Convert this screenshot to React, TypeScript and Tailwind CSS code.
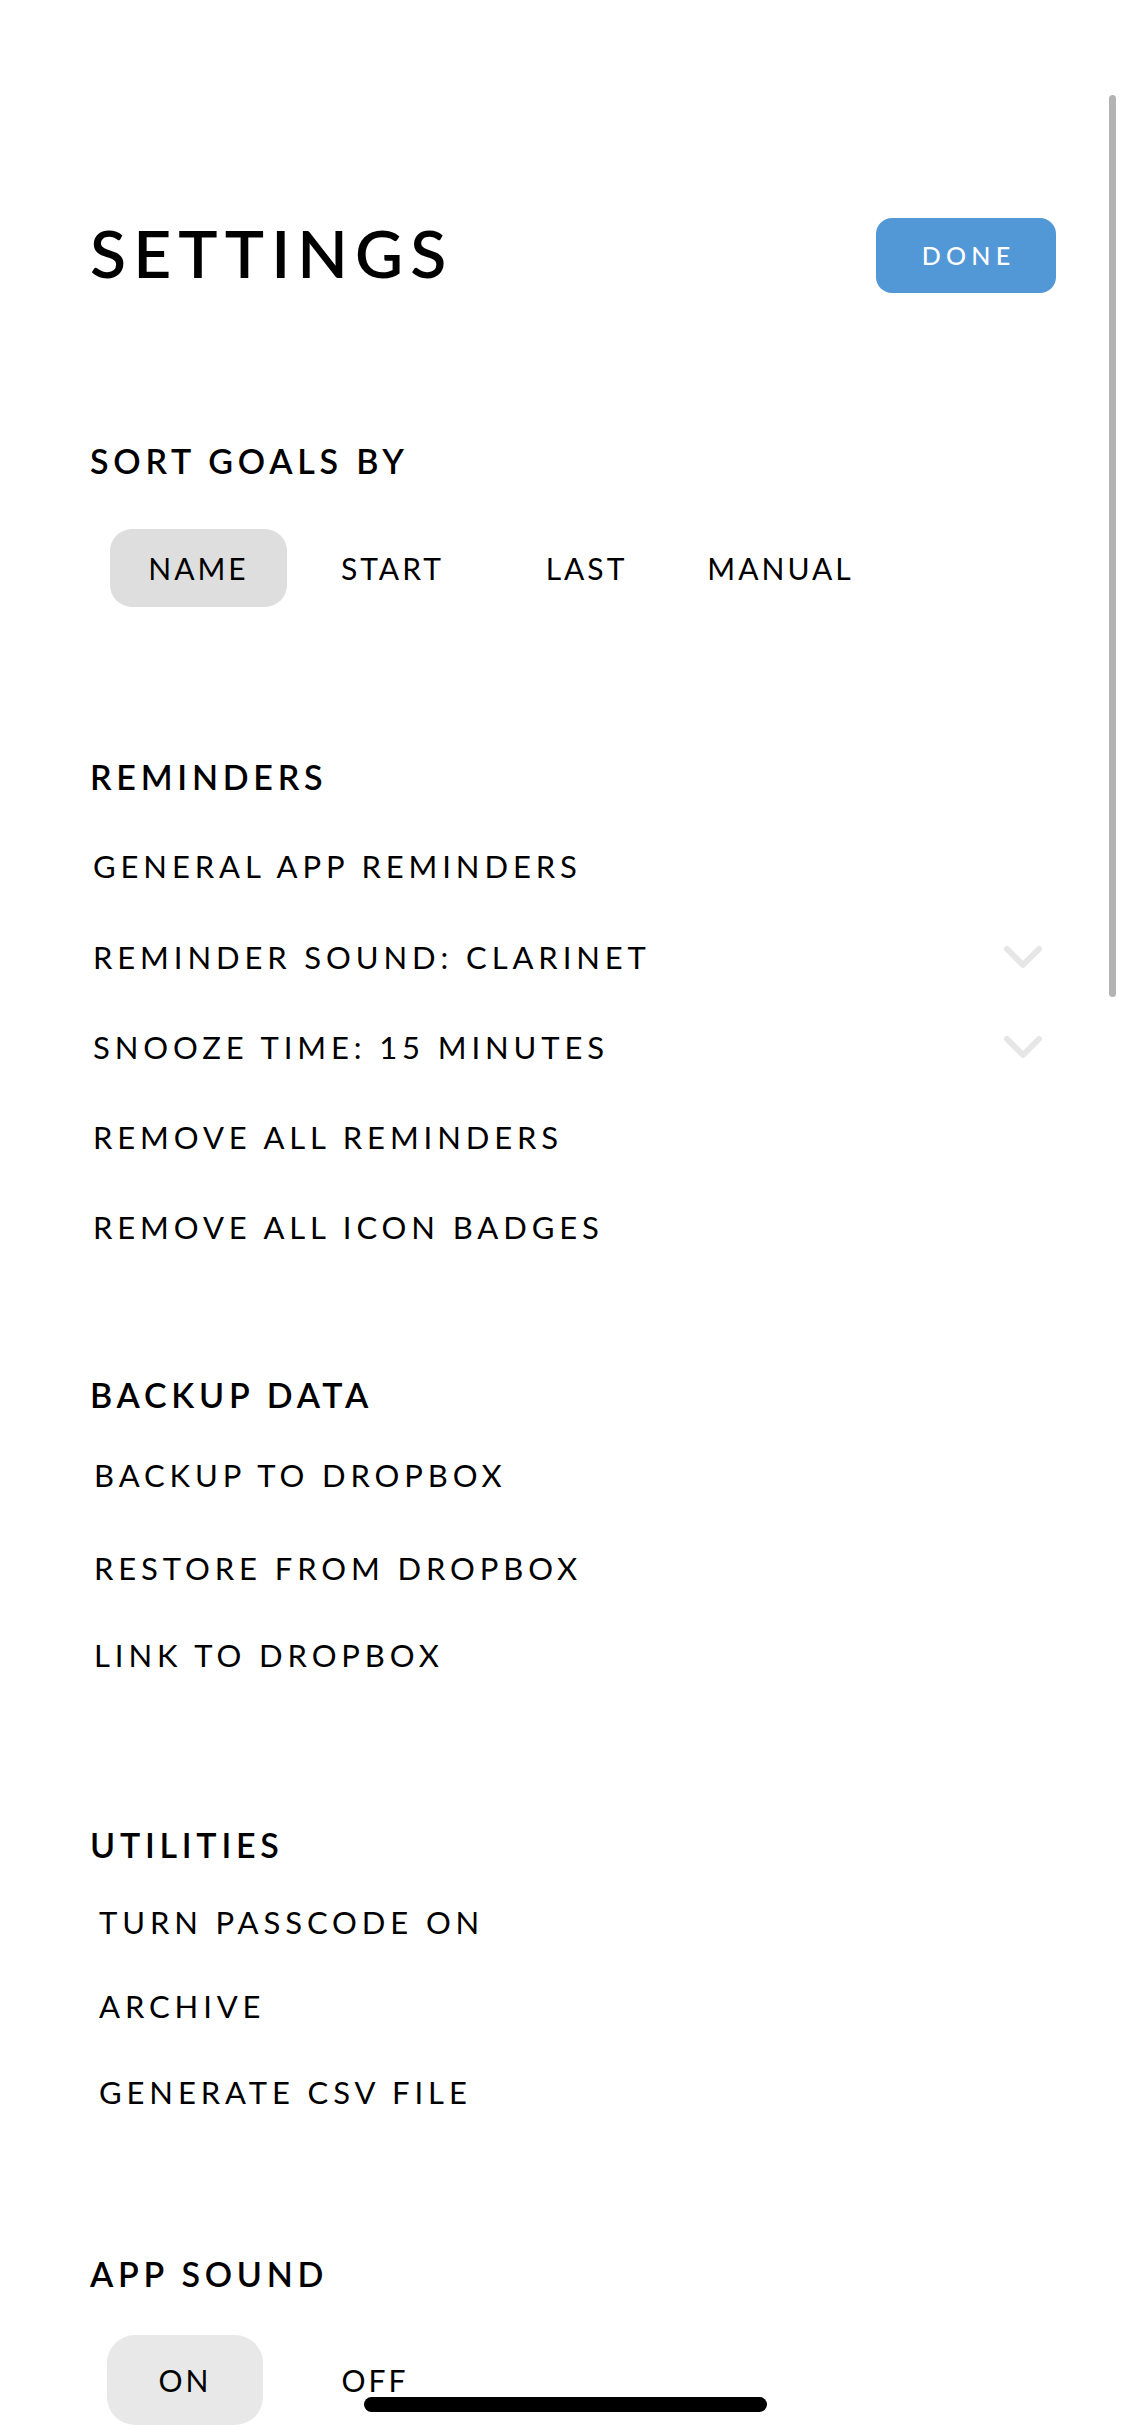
import React from "react";

const Chevron = () => (
  <svg width="40" height="24" viewBox="0 0 40 24" fill="none">
    <polyline points="4,4 20,20 36,4" stroke="#e6e6e6" strokeWidth="6" strokeLinecap="round" strokeLinejoin="round" />
  </svg>
);

const Heading = ({ children, mt }: { children: React.ReactNode; mt: string }) => (
  <div className={`${mt} h-[40px] flex items-center text-[34px] font-semibold tracking-[0.14em] text-black leading-none`}>
    {children}
  </div>
);

const Item = ({ children, mt, pl, chevron }: { children: React.ReactNode; mt: string; pl: string; chevron?: boolean }) => (
  <div className={`${mt} ${pl} h-[40px] w-[953px] flex items-center justify-between text-[31px] tracking-[0.158em] text-black leading-none`}>
    <span>{children}</span>
    {chevron ? <Chevron /> : null}
  </div>
);

export default function App() {
  return (
    <div
      className="relative w-[1125px] h-[2436px] bg-white overflow-hidden"
      style={{ fontFamily: "Lato, 'Open Sans', sans-serif" }}
    >
      <div className="flex flex-col pl-[90px] pr-[69px] pt-[218px]">
        <div className="h-[75px] flex items-center justify-between">
          <div className="mb-[6px] text-[66px] font-semibold tracking-[0.108em] leading-none text-black">SETTINGS</div>
          <button className="w-[180px] h-[75px] rounded-[16px] bg-[#5297d6] text-white text-[25px] font-medium tracking-[0.21em] leading-none flex items-center justify-center pl-[5px]">
            DONE
          </button>
        </div>

        <Heading mt="mt-[148px]">SORT GOALS BY</Heading>
        <div className="mt-[48px] ml-[20px] flex gap-[17px] text-[30px] tracking-[0.1em] leading-none text-black">
          <div className="w-[177px] h-[78px] rounded-[22px] bg-[#dedede] flex items-center justify-center">NAME</div>
          <div className="w-[177px] h-[78px] flex items-center justify-center">START</div>
          <div className="w-[177px] h-[78px] flex items-center justify-center">LAST</div>
          <div className="w-[177px] h-[78px] flex items-center justify-center">MANUAL</div>
        </div>

        <Heading mt="mt-[150px]">REMINDERS</Heading>
        <Item mt="mt-[49px]" pl="pl-[3px]">GENERAL APP REMINDERS</Item>
        <Item mt="mt-[51px]" pl="pl-[3px]" chevron>REMINDER SOUND: CLARINET</Item>
        <Item mt="mt-[50px]" pl="pl-[3px]" chevron>SNOOZE TIME: 15 MINUTES</Item>
        <Item mt="mt-[50px]" pl="pl-[3px]">REMOVE ALL REMINDERS</Item>
        <Item mt="mt-[50px]" pl="pl-[3px]">REMOVE ALL ICON BADGES</Item>

        <Heading mt="mt-[128px]">BACKUP DATA</Heading>
        <Item mt="mt-[40px]" pl="pl-[4px]">BACKUP TO DROPBOX</Item>
        <Item mt="mt-[53px]" pl="pl-[4px]">RESTORE FROM DROPBOX</Item>
        <Item mt="mt-[47px]" pl="pl-[4px]">LINK TO DROPBOX</Item>

        <Heading mt="mt-[150px]">UTILITIES</Heading>
        <Item mt="mt-[37px]" pl="pl-[9px]">TURN PASSCODE ON</Item>
        <Item mt="mt-[44px]" pl="pl-[9px]">ARCHIVE</Item>
        <Item mt="mt-[46px]" pl="pl-[9px]">GENERATE CSV FILE</Item>

        <Heading mt="mt-[142px]">APP SOUND</Heading>
        <div className="mt-[41px] ml-[17px] flex gap-[34px] text-[30px] tracking-[0.1em] leading-none text-black">
          <div className="w-[156px] h-[90px] rounded-[28px] bg-[#e8e8e8] flex items-center justify-center">ON</div>
          <div className="w-[156px] h-[90px] flex items-center justify-center">OFF</div>
        </div>
      </div>

      {/* scroll indicator */}
      <div className="absolute left-[1109px] top-[95px] w-[7px] h-[902px] rounded-full bg-[#b3b3b3]" />
      {/* home indicator */}
      <div className="absolute left-[364px] top-[2397px] w-[403px] h-[15px] rounded-full bg-black" />
    </div>
  );
}
